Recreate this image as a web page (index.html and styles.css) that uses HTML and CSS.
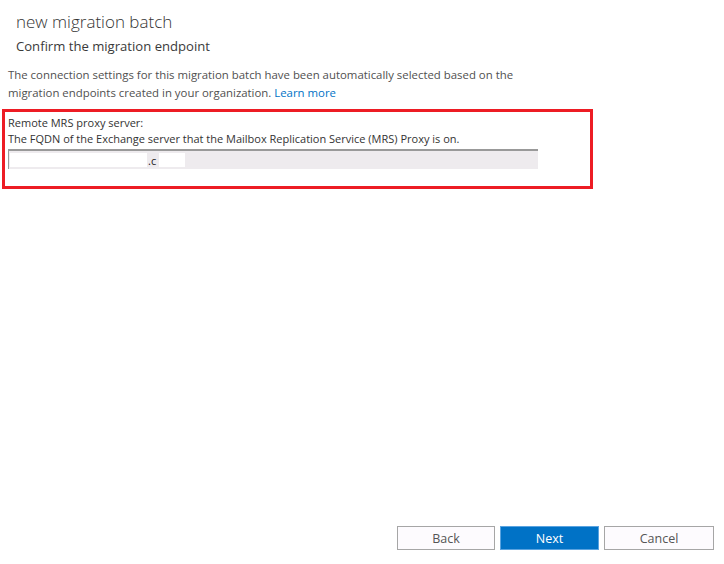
FILE: index.html
```html
<!DOCTYPE html>
<html>
<head>
<meta charset="utf-8">
<link rel="stylesheet" href="styles.css">
</head>
<body>
<div class="page">
  <header class="head">
    <h1 class="title">new migration batch</h1>
    <h2 class="subtitle">Confirm the migration endpoint</h2>
  </header>
  <p class="intro">The connection settings for this migration batch have been automatically selected based on the<br>migration endpoints created in your organization. <a class="link" href="#">Learn more</a></p>
  <section class="highlight">
    <div class="label">Remote MRS proxy server:</div>
    <div class="desc">The FQDN of the Exchange server that the Mailbox Replication Service (MRS) Proxy is on.</div>
    <div class="field">
      <span class="redact r1"></span><span class="val">.c</span><span class="redact r2"></span>
    </div>
  </section>
  <div class="spacer"></div>
  <footer class="buttons">
    <button class="btn back">Back</button>
    <button class="btn next">Next</button>
    <button class="btn cancel">Cancel</button>
  </footer>
</div>
</body>
</html>
```
FILE: styles.css
```css
html, body {
  margin: 0;
  padding: 0;
  background: #ffffff;
}
.page {
  width: 724px;
  height: 564px;
  display: flex;
  flex-direction: column;
  font-family: "Open Sans", "Noto Sans", sans-serif;
  color: #444444;
}
.head {
  padding: 9px 0 0 16px;
}
.title {
  margin: 0;
  font-size: 17px;
  font-weight: 300;
  line-height: 26px;
  color: #333333;
}
.subtitle {
  margin: 1px 0 0 0;
  font-size: 13.1px;
  font-weight: 400;
  line-height: 20px;
  color: #3a3a3a;
}
.intro {
  margin: 10px 0 0 8px;
  font-size: 11.4px;
  line-height: 18px;
  color: #505050;
}
.link {
  color: #0072c6;
  text-decoration: none;
}
.highlight {
  margin: 7px 0 0 2px;
  width: 582px;
  height: 74px;
  border: 3px solid #ed1c24;
  padding: 0 0 0 3px;
}
.label, .desc {
  font-size: 11px;
  line-height: 16px;
  color: #333333;
}
.label {
  margin-top: 3px;
}
.field {
  margin-top: 2px;
  width: 529px;
  height: 18px;
  background: #eeebee;
  border-top: 2px solid #999999;
  border-left: 1px solid #999999;
  display: flex;
  align-items: center;
  font-size: 11px;
  color: #222222;
}
.redact {
  background: #ffffff;
  height: 14px;
}
.r1 { width: 137px; margin-left: 1px; }
.r2 { width: 26px; }
.val { padding: 0 3px 0 1px; }
.spacer { flex: 1; }
.buttons {
  display: flex;
  gap: 5px;
  padding: 0 0 14px 397px;
}
.btn {
  height: 24px;
  font-family: "Open Sans", "Noto Sans", sans-serif;
  font-size: 12.5px;
  padding: 0;
  border: 1px solid #a6a6a6;
  background: #fdfbfe;
  color: #555555;
}
.back { width: 98px; }
.next {
  width: 99px;
  background: #0072c6;
  border-color: #5aa3e0;
  color: #ffffff;
}
.cancel { width: 110px; }
```
